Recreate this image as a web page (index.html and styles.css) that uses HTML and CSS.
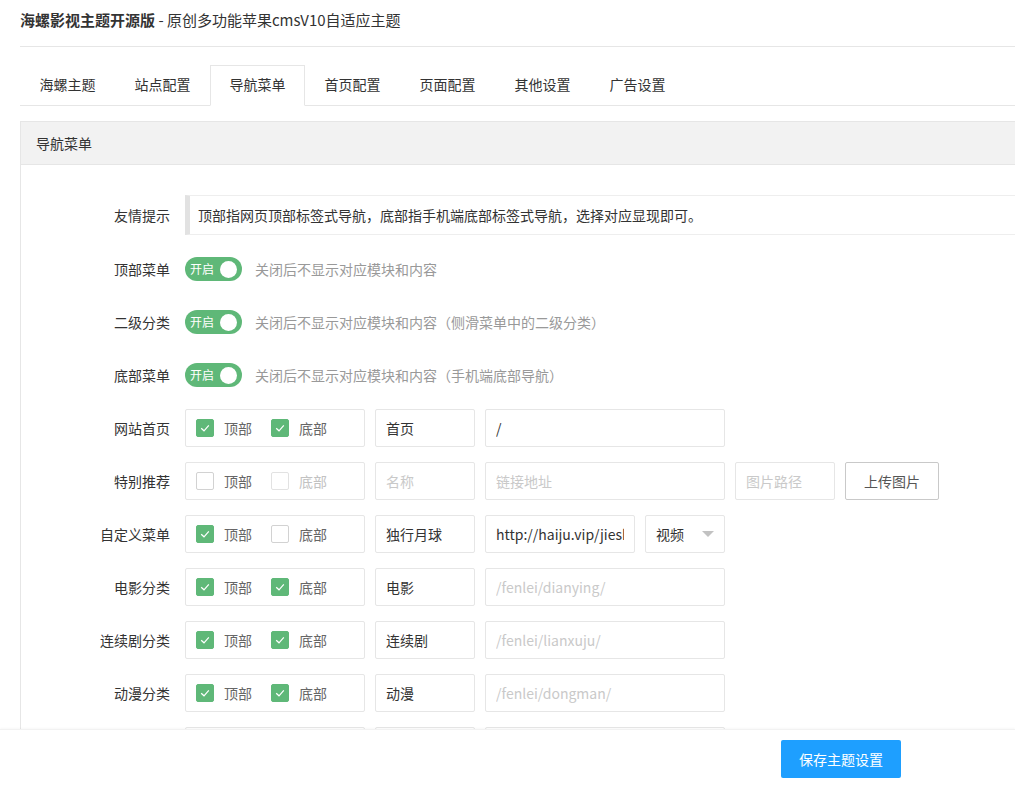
FILE: index.html
```html
<html>

<head>
    <title>海螺影视主题开源版</title>
    <meta charset="utf-8">
    <link rel="stylesheet" href="styles.css">
</head>

<body>
    <div class="page">
        <div class="title"><b>海螺影视主题开源版</b> - 原创多功能苹果cmsV10自适应主题</div>
        <ul class="tabs">
            <li>海螺主题</li>
            <li>站点配置</li>
            <li class="active">导航菜单</li>
            <li>首页配置</li>
            <li>页面配置</li>
            <li>其他设置</li>
            <li>广告设置</li>
        </ul>
        <div class="card">
            <div class="card-head">导航菜单</div>
            <div class="card-body">
                <div class="item">
                    <label class="label">友情提示</label>
                    <div class="quote">顶部指网页顶部标签式导航，底部指手机端底部标签式导航，选择对应显现即可。</div>
                </div>
                <div class="item">
                    <label class="label">顶部菜单</label>
                    <span class="switch"><em>开启</em><i></i></span>
                    <span class="aux">关闭后不显示对应模块和内容</span>
                </div>
                <div class="item">
                    <label class="label">二级分类</label>
                    <span class="switch"><em>开启</em><i></i></span>
                    <span class="aux">关闭后不显示对应模块和内容（侧滑菜单中的二级分类）</span>
                </div>
                <div class="item">
                    <label class="label">底部菜单</label>
                    <span class="switch"><em>开启</em><i></i></span>
                    <span class="aux">关闭后不显示对应模块和内容（手机端底部导航）</span>
                </div>
                <div class="item">
                    <label class="label">网站首页</label>
                    <div class="checks">
                        <span class="check on"><i><svg width="12" height="12" viewBox="0 0 12 12"><path d="M2.2 6.2 L5 8.8 L9.8 3.4" fill="none" stroke="#fff" stroke-width="1.2"/></svg></i>顶部</span>
                        <span class="check on"><i><svg width="12" height="12" viewBox="0 0 12 12"><path d="M2.2 6.2 L5 8.8 L9.8 3.4" fill="none" stroke="#fff" stroke-width="1.2"/></svg></i>底部</span>
                    </div>
                    <input class="field w100" value="首页">
                    <input class="field w240" value="/">
                </div>
                <div class="item">
                    <label class="label">特别推荐</label>
                    <div class="checks">
                        <span class="check"><i></i>顶部</span>
                        <span class="check disabled"><i></i>底部</span>
                    </div>
                    <input class="field w100" placeholder="名称">
                    <input class="field w240" placeholder="链接地址">
                    <input class="field w100" placeholder="图片路径">
                    <button class="btn">上传图片</button>
                </div>
                <div class="item">
                    <label class="label">自定义菜单</label>
                    <div class="checks">
                        <span class="check on"><i><svg width="12" height="12" viewBox="0 0 12 12"><path d="M2.2 6.2 L5 8.8 L9.8 3.4" fill="none" stroke="#fff" stroke-width="1.2"/></svg></i>顶部</span>
                        <span class="check"><i></i>底部</span>
                    </div>
                    <input class="field w100" value="独行月球">
                    <input class="field w150" value="http://haiju.vip/jieshao/">
                    <div class="select">视频<span class="arrow"></span></div>
                </div>
                <div class="item">
                    <label class="label">电影分类</label>
                    <div class="checks">
                        <span class="check on"><i><svg width="12" height="12" viewBox="0 0 12 12"><path d="M2.2 6.2 L5 8.8 L9.8 3.4" fill="none" stroke="#fff" stroke-width="1.2"/></svg></i>顶部</span>
                        <span class="check on"><i><svg width="12" height="12" viewBox="0 0 12 12"><path d="M2.2 6.2 L5 8.8 L9.8 3.4" fill="none" stroke="#fff" stroke-width="1.2"/></svg></i>底部</span>
                    </div>
                    <input class="field w100" value="电影">
                    <input class="field w240" placeholder="/fenlei/dianying/">
                </div>
                <div class="item">
                    <label class="label">连续剧分类</label>
                    <div class="checks">
                        <span class="check on"><i><svg width="12" height="12" viewBox="0 0 12 12"><path d="M2.2 6.2 L5 8.8 L9.8 3.4" fill="none" stroke="#fff" stroke-width="1.2"/></svg></i>顶部</span>
                        <span class="check on"><i><svg width="12" height="12" viewBox="0 0 12 12"><path d="M2.2 6.2 L5 8.8 L9.8 3.4" fill="none" stroke="#fff" stroke-width="1.2"/></svg></i>底部</span>
                    </div>
                    <input class="field w100" value="连续剧">
                    <input class="field w240" placeholder="/fenlei/lianxuju/">
                </div>
                <div class="item">
                    <label class="label">动漫分类</label>
                    <div class="checks">
                        <span class="check on"><i><svg width="12" height="12" viewBox="0 0 12 12"><path d="M2.2 6.2 L5 8.8 L9.8 3.4" fill="none" stroke="#fff" stroke-width="1.2"/></svg></i>顶部</span>
                        <span class="check on"><i><svg width="12" height="12" viewBox="0 0 12 12"><path d="M2.2 6.2 L5 8.8 L9.8 3.4" fill="none" stroke="#fff" stroke-width="1.2"/></svg></i>底部</span>
                    </div>
                    <input class="field w100" value="动漫">
                    <input class="field w240" placeholder="/fenlei/dongman/">
                </div>
                <div class="item">
                    <label class="label">综艺分类</label>
                    <div class="checks">
                        <span class="check on"><i><svg width="12" height="12" viewBox="0 0 12 12"><path d="M2.2 6.2 L5 8.8 L9.8 3.4" fill="none" stroke="#fff" stroke-width="1.2"/></svg></i>顶部</span>
                        <span class="check on"><i><svg width="12" height="12" viewBox="0 0 12 12"><path d="M2.2 6.2 L5 8.8 L9.8 3.4" fill="none" stroke="#fff" stroke-width="1.2"/></svg></i>底部</span>
                    </div>
                    <input class="field w100" value="综艺">
                    <input class="field w240" placeholder="/fenlei/zongyi/">
                </div>
            </div>
        </div>
    </div>
    <div class="footer">
        <button class="btn-save">保存主题设置</button>
    </div>
</body>

</html>
```

FILE: styles.css
```css
html,
body {
    margin: 0;
    height: 100%;
    overflow: hidden;
}

body {
    font-family: "Noto Sans CJK SC", "Microsoft YaHei", sans-serif;
    font-size: 14px;
    color: #333;
    background-color: #fff;
}

.page {
    width: 1200px;
    padding-left: 20px;
}

.title {
    padding: 10px 0 16px;
    font-size: 15px;
    line-height: 20px;
    border-bottom: 1px solid #e6e6e6;
}

.title b {
    font-weight: bold;
}

.tabs {
    list-style: none;
    margin: 18px 0 0;
    padding: 0;
    display: flex;
    height: 40px;
    border-bottom: 1px solid #e6e6e6;
}

.tabs li {
    width: 95px;
    height: 40px;
    line-height: 39px;
    text-align: center;
    box-sizing: border-box;
}

.tabs li.active {
    height: 41px;
    line-height: 37px;
    border: 1px solid #e6e6e6;
    border-bottom-color: #fff;
    background-color: #fff;
}

.card {
    margin-top: 15px;
    border: 1px solid #e6e6e6;
    border-right: none;
}

.card-head {
    height: 42px;
    line-height: 42px;
    padding: 0 15px;
    background-color: #f2f2f2;
    border-bottom: 1px solid #e6e6e6;
}

.card-body {
    padding: 30px 0 20px;
}

.item {
    display: flex;
    align-items: center;
    min-height: 38px;
    margin-bottom: 15px;
}

.label {
    width: 164px;
    padding-right: 15px;
    box-sizing: border-box;
    text-align: right;
    flex-shrink: 0;
    line-height: 20px;
}

.quote {
    flex: 1;
    height: 40px;
    box-sizing: border-box;
    line-height: 38px;
    padding-left: 8px;
    border: 1px solid #eee;
    border-left: 5px solid #e2e2e2;
}

.switch {
    display: flex;
    align-items: center;
    justify-content: space-between;
    width: 57px;
    height: 24px;
    box-sizing: border-box;
    padding: 0 5px;
    border-radius: 20px;
    background-color: #5FB878;
}

.switch em {
    font-style: normal;
    font-size: 12px;
    color: #fff;
    line-height: 24px;
}

.switch i {
    width: 17px;
    height: 17px;
    border-radius: 50%;
    background-color: #fff;
}

.aux {
    color: #999;
    margin-left: 13px;
}

.checks {
    display: flex;
    align-items: center;
    width: 180px;
    height: 38px;
    box-sizing: border-box;
    padding-left: 10px;
    border: 1px solid #e6e6e6;
    border-radius: 2px;
    flex-shrink: 0;
}

.check {
    display: flex;
    align-items: center;
    color: #666;
    margin-right: 19px;
}

.check i {
    display: flex;
    align-items: center;
    justify-content: center;
    width: 18px;
    height: 18px;
    box-sizing: border-box;
    margin-right: 10px;
    border: 1px solid #d2d2d2;
    border-radius: 2px;
    background-color: #fff;
}

.check.on i {
    border-color: #5FB878;
    background-color: #5FB878;
}

.check.disabled {
    color: #c2c2c2;
}

.check.disabled i {
    border-color: #e2e2e2;
}

.field {
    height: 38px;
    box-sizing: border-box;
    margin: 0 0 0 10px;
    padding: 0 10px;
    border: 1px solid #e6e6e6;
    border-radius: 2px;
    font-family: inherit;
    font-size: 14px;
    color: #333;
    outline: none;
    flex-shrink: 0;
}

.field::placeholder {
    color: #c9c9c9;
}

.w100 {
    width: 100px;
}

.w150 {
    width: 150px;
}

.w240 {
    width: 240px;
}

.btn {
    height: 38px;
    margin-left: 10px;
    padding: 0 18px;
    border: 1px solid #c9c9c9;
    border-radius: 2px;
    background-color: #fff;
    color: #555;
    font-family: inherit;
    font-size: 14px;
}

.select {
    display: flex;
    align-items: center;
    width: 80px;
    height: 38px;
    box-sizing: border-box;
    margin-left: 10px;
    padding: 0 10px;
    border: 1px solid #e6e6e6;
    border-radius: 2px;
}

.select .arrow {
    margin-left: auto;
    width: 0;
    height: 0;
    border: 6px solid transparent;
    border-top-color: #c2c2c2;
    border-bottom: none;
}

.footer {
    position: fixed;
    left: 0;
    right: 0;
    bottom: 0;
    height: 59px;
    box-sizing: border-box;
    padding-top: 10px;
    border-top: 1px solid #f2f2f2;
    background-color: #fff;
    box-shadow: 0 -1px 2px rgba(0, 0, 0, 0.03);
}

.btn-save {
    margin-left: 781px;
    width: 120px;
    height: 38px;
    border: none;
    border-radius: 2px;
    background-color: #1E9FFF;
    color: #fff;
    font-family: inherit;
    font-size: 14px;
}
```
